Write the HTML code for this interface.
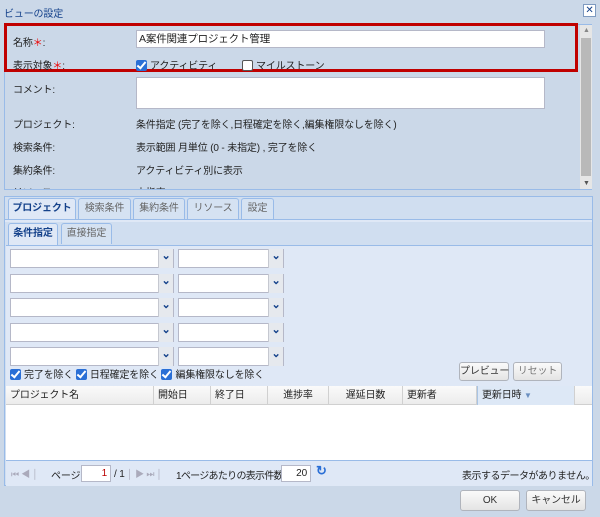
<!DOCTYPE html>
<html><head><meta charset="utf-8"><style>
*{box-sizing:border-box;margin:0;padding:0}
body{width:600px;height:517px;overflow:hidden;background:#cbd8e8;font-family:"Liberation Sans","Noto Sans CJK JP",sans-serif;font-size:10px;letter-spacing:-0.15px;color:#222;position:relative}
.a{position:absolute;white-space:nowrap}
.lbl{position:absolute;left:13px;font-size:10px;color:#222;white-space:nowrap}
.val{position:absolute;left:136px;font-size:10px;color:#222;white-space:nowrap}
.inp{position:absolute;background:#fff;border:1px solid #b5b8c8;white-space:nowrap}
.cb{display:inline-block;width:11px;height:11px;border-radius:2px;vertical-align:-2px;margin-right:3px;position:relative}
.cb.on{background:#2a6fd6}
.cb.on:after{content:"";position:absolute;left:3px;top:0px;width:3px;height:7px;border:solid #fff;border-width:0 2px 2px 0;transform:rotate(40deg)}
.cb.off{background:#fff;border:1px solid #555}
.tab{position:absolute;top:198px;height:21px;border:1px solid #99bbe8;border-bottom:none;background:#d5e2f2;color:#666;text-align:center;line-height:20px;border-radius:3px 3px 0 0;white-space:nowrap}
.tab.act{background:#dfe8f6;color:#15428b;font-weight:bold;height:22px}
.st{position:absolute;top:223px;height:21px;border:1px solid #99bbe8;border-bottom:none;background:#d5e2f2;color:#666;text-align:center;line-height:20px;border-radius:3px 3px 0 0;white-space:nowrap}
.st.act{background:#dfe8f6;color:#15428b;font-weight:bold;height:23px}
.cmb{position:absolute;height:19px;background:#fff;border:1px solid #b5b8c8}
.cmb:after{content:"⌄";position:absolute;right:0;top:-1px;width:14px;height:19px;background:#e6e9ee;border-left:1px solid #c5c8d0;color:#15428b;font-size:11px;text-align:center;line-height:14px;font-weight:bold}
.btn{position:absolute;border:1px solid #b0b4bc;border-radius:3px;background:linear-gradient(#fafafa,#e4e4e4);text-align:center;color:#333;white-space:nowrap}
.hd{position:absolute;top:386px;height:19px;border-right:1px solid #d0d0d0;line-height:19px;padding-left:4px;font-size:10px;color:#222;white-space:nowrap}
</style></head><body>
<div class="a" style="left:4px;top:5px;font-size:10px;color:#15428b">ビューの設定</div>
<div class="a" style="left:583px;top:4px;width:13px;height:13px;border:1px solid #7e9ac0;background:#fff;color:#15428b;font-size:10px;line-height:11px;text-align:center">✕</div>

<div class="a" style="left:4px;top:24px;width:588px;height:166px;background:#cbd8e8;border:1px solid #99bbe8"></div>
<div class="a" style="left:580px;top:25px;width:12px;height:164px;background:#e6e6e6"></div>
<div class="a" style="left:581px;top:38px;width:10px;height:138px;background:#b9b9b9"></div>
<div class="a" style="left:583px;top:27px;font-size:7px;color:#888">▲</div>
<div class="a" style="left:583px;top:180px;font-size:7px;color:#555">▼</div>

<div class="a" style="left:4px;top:23px;width:574px;height:49px;border:3px solid #c00000"></div>
<div class="lbl" style="top:34px">名称<span style="color:#e00">＊</span>:</div>
<div class="inp" style="left:136px;top:30px;width:409px;height:18px;padding-left:2px;line-height:16px;font-size:10.5px">A案件関連プロジェクト管理</div>
<div class="lbl" style="top:57px">表示対象<span style="color:#e00">＊</span>:</div>
<div class="val" style="top:57px"><span class="cb on"></span>アクティビティ</div>
<div class="val" style="left:242px;top:57px"><span class="cb off"></span>マイルストーン</div>
<div class="lbl" style="top:81px">コメント:</div>
<div class="inp" style="left:136px;top:77px;width:409px;height:32px"></div>
<div class="lbl" style="top:116px">プロジェクト:</div>
<div class="val" style="top:116px">条件指定 (完了を除く,日程確定を除く,編集権限なしを除く)</div>
<div class="lbl" style="top:139px">検索条件:</div>
<div class="val" style="top:139px">表示範囲 月単位 (0 - 未指定) , 完了を除く</div>
<div class="lbl" style="top:162px">集約条件:</div>
<div class="val" style="top:162px">アクティビティ別に表示</div>
<div class="a" style="left:5px;top:180px;width:575px;height:9px;overflow:hidden"><div class="a" style="left:8px;top:4px">リソース:</div><div class="a" style="left:131px;top:4px">未指定</div></div>

<div class="a" style="left:4px;top:196px;width:589px;height:290px;border:1px solid #99bbe8;background:#d0def0"></div>
<div class="tab act" style="left:8px;width:68px">プロジェクト</div>
<div class="tab" style="left:78px;width:53px">検索条件</div>
<div class="tab" style="left:133px;width:52px">集約条件</div>
<div class="tab" style="left:187px;width:52px">リソース</div>
<div class="tab" style="left:241px;width:33px">設定</div>
<div class="a" style="left:5px;top:219px;width:587px;height:3px;background:#dfe8f6;border-top:1px solid #99bbe8"></div>
<div class="st act" style="left:8px;width:50px">条件指定</div>
<div class="st" style="left:61px;width:51px">直接指定</div>
<div class="a" style="left:6px;top:245px;width:586px;height:241px;background:#dfe8f6;border-top:1px solid #99bbe8"></div>

<div class="cmb" style="left:10px;top:249px;width:164px"></div><div class="cmb" style="left:178px;top:249px;width:106px"></div>
<div class="cmb" style="left:10px;top:274px;width:164px"></div><div class="cmb" style="left:178px;top:274px;width:106px"></div>
<div class="cmb" style="left:10px;top:298px;width:164px"></div><div class="cmb" style="left:178px;top:298px;width:106px"></div>
<div class="cmb" style="left:10px;top:323px;width:164px"></div><div class="cmb" style="left:178px;top:323px;width:106px"></div>
<div class="cmb" style="left:10px;top:347px;width:164px"></div><div class="cmb" style="left:178px;top:347px;width:106px"></div>

<div class="a" style="left:10px;top:366px"><span class="cb on"></span>完了を除く <span class="cb on"></span>日程確定を除く <span class="cb on"></span>編集権限なしを除く</div>
<div class="btn" style="left:459px;top:362px;width:50px;height:19px;line-height:17px">プレビュー</div>
<div class="btn" style="left:513px;top:362px;width:49px;height:19px;line-height:17px;color:#777">リセット</div>

<div class="a" style="left:6px;top:386px;width:586px;height:19px;background:linear-gradient(#fafafa,#ececec);border-bottom:1px solid #d0d0d0"></div>
<div class="hd" style="left:6px;width:148px">プロジェクト名</div>
<div class="hd" style="left:154px;width:57px">開始日</div>
<div class="hd" style="left:211px;width:57px">終了日</div>
<div class="hd" style="left:268px;width:61px;text-align:center;padding:0">進捗率</div>
<div class="hd" style="left:329px;width:74px;text-align:center;padding:0">遅延日数</div>
<div class="hd" style="left:403px;width:74px">更新者</div>
<div class="hd" style="left:477px;width:98px;background:#dde8f6;border-left:1px solid #a9c4e4">更新日時 <span style="color:#6b8fc0;font-size:8px">▼</span></div>
<div class="a" style="left:6px;top:405px;width:586px;height:56px;background:#fff;border-bottom:1px solid #99bbe8"></div>

<div class="a" style="left:11px;top:467px;font-size:9px;color:#aab">⏮ ◀ │</div>
<div class="a" style="left:51px;top:467px">ページ</div>
<div class="inp" style="left:81px;top:465px;width:30px;height:17px;text-align:right;padding-right:3px;line-height:15px;color:#b00">1</div>
<div class="a" style="left:114px;top:467px">/ 1 <span style="color:#aab;font-size:9px">│ ▶ ⏭ │</span></div>
<div class="a" style="left:176px;top:467px;letter-spacing:-0.7px">1ページあたりの表示件数</div>
<div class="inp" style="left:281px;top:465px;width:30px;height:17px;text-align:right;padding-right:3px;line-height:15px">20</div>
<div class="a" style="left:316px;top:463px;font-size:13px;color:#2a6fd6;font-weight:bold">↻</div>
<div class="a" style="left:462px;top:467px;letter-spacing:-0.5px">表示するデータがありません。</div>

<div class="btn" style="left:460px;top:490px;width:60px;height:21px;line-height:19px">OK</div>
<div class="btn" style="left:526px;top:490px;width:60px;height:21px;line-height:19px">キャンセル</div>
</body></html>
